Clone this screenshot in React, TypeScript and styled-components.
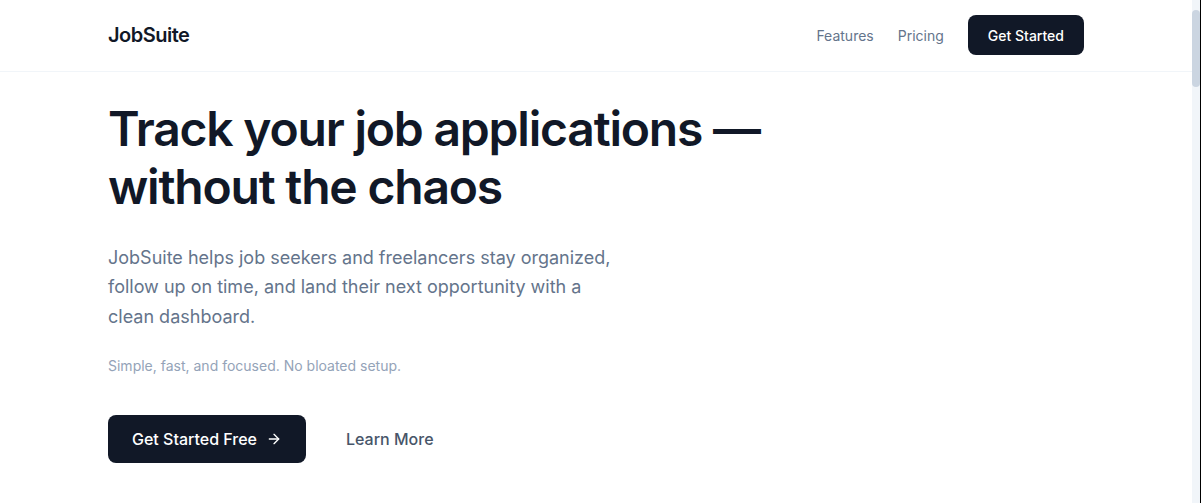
import styled, { createGlobalStyle } from 'styled-components'
import { ArrowRight } from 'lucide-react'

const features = [
  { title: 'Application tracker', text: 'Keep every role, company and status in one tidy board.' },
  { title: 'Follow-up reminders', text: 'Never miss a follow-up with gentle, timely nudges.' },
  { title: 'Clean dashboard', text: 'See your progress at a glance without the clutter.' },
]

const plans = [
  { name: 'Free', price: '$0', text: 'Up to 20 applications' },
  { name: 'Pro', price: '$9', text: 'Unlimited applications and reminders' },
]

export default function App() {
  return (
    <Page>
      <GlobalStyle />
      <Header>
        <Container>
          <Bar>
            <Logo>JobSuite</Logo>
            <Nav>
              <NavLink href="#features">Features</NavLink>
              <NavLink href="#pricing">Pricing</NavLink>
              <Button $size="sm">Get Started</Button>
            </Nav>
          </Bar>
        </Container>
      </Header>

      <Hero>
        <Container>
          <Title>
            Track your job applications —<br />
            without the chaos
          </Title>
          <Lead>
            JobSuite helps job seekers and freelancers stay organized, follow up on time, and land
            their next opportunity with a clean dashboard.
          </Lead>
          <Note>Simple, fast, and focused. No bloated setup.</Note>
          <Actions>
            <Button $size="lg">
              Get Started Free
              <ArrowRight size={16} strokeWidth={2} />
            </Button>
            <GhostLink href="#features">Learn More</GhostLink>
          </Actions>
        </Container>
      </Hero>

      <Section id="features">
        <Container>
          <SectionTitle>Features</SectionTitle>
          <Grid>
            {features.map((f) => (
              <Card key={f.title}>
                <CardTitle>{f.title}</CardTitle>
                <CardText>{f.text}</CardText>
              </Card>
            ))}
          </Grid>
        </Container>
      </Section>

      <Section id="pricing">
        <Container>
          <SectionTitle>Pricing</SectionTitle>
          <Grid>
            {plans.map((p) => (
              <Card key={p.name}>
                <CardTitle>{p.name}</CardTitle>
                <Price>{p.price}</Price>
                <CardText>{p.text}</CardText>
              </Card>
            ))}
          </Grid>
        </Container>
      </Section>

      <ScrollRail>
        <ScrollThumb />
      </ScrollRail>
    </Page>
  )
}

/**
 * style定義
 */
const GlobalStyle = createGlobalStyle`
  * { box-sizing: border-box; }
  html, body {
    margin: 0;
    padding: 0;
    background: #ffffff;
    font-family: Inter, "Noto Sans", "Liberation Sans", sans-serif;
    -webkit-font-smoothing: antialiased;
  }
  ::-webkit-scrollbar { width: 0; }
`

const Page = styled.div`
  padding-right: 9px;
  color: #111827;
`

// scrollbar as it shows in the picture
const ScrollRail = styled.div`
  position: fixed;
  top: 0;
  right: 0;
  width: 9px;
  height: 100vh;
  background: #f1f5f9;
  border-right: 1px solid #000000;
`

const ScrollThumb = styled.div`
  margin-top: 10px;
  width: 8px;
  height: 77px;
  border-radius: 4px;
  background: #cbd5e1;
`

const Container = styled.div`
  max-width: 976px;
  margin: 0 auto;
`

const Header = styled.header`
  background: #ffffff;
  border-bottom: 1px solid #f1f5f9;
`

const Bar = styled.div`
  display: flex;
  align-items: center;
  justify-content: space-between;
  height: 71px;
  padding-bottom: 1px;
`

const Logo = styled.div`
  font-size: 20px;
  font-weight: 600;
  letter-spacing: -0.025em;
  color: #111827;
`

const Nav = styled.nav`
  display: flex;
  align-items: center;
  gap: 24px;
`

const NavLink = styled.a`
  font-size: 14px;
  color: #64748b;
  text-decoration: none;
`

const Button = styled.button<{ $size: 'sm' | 'lg' }>`
  display: inline-flex;
  align-items: center;
  gap: 9px;
  border: none;
  border-radius: 8px;
  background: #111827;
  color: #ffffff;
  font-family: inherit;
  font-weight: 500;
  cursor: pointer;
  height: ${({ $size }) => ($size === 'sm' ? '40px' : '48px')};
  padding: ${({ $size }) => ($size === 'sm' ? '0 20px' : '0 24px')};
  font-size: ${({ $size }) => ($size === 'sm' ? '14px' : '16px')};
`

const Hero = styled.section`
  padding: 28px 0 120px;
`

const Title = styled.h1`
  margin: 0;
  font-size: 48px;
  line-height: 1.2;
  font-weight: 600;
  letter-spacing: -0.025em;
  color: #111827;
`

const Lead = styled.p`
  margin: 28px 0 0;
  max-width: 512px;
  font-size: 18px;
  line-height: 1.625;
  color: #64748b;
`

const Note = styled.p`
  margin: 25px 0 0;
  font-size: 14px;
  line-height: 20px;
  color: #94a3b8;
`

const Actions = styled.div`
  display: flex;
  align-items: center;
  gap: 40px;
  margin-top: 39px;
`

const GhostLink = styled.a`
  font-size: 16px;
  font-weight: 500;
  color: #475569;
  text-decoration: none;
`

const Section = styled.section`
  padding: 96px 0;
  border-top: 1px solid #f1f5f9;
`

const SectionTitle = styled.h2`
  margin: 0 0 32px;
  font-size: 30px;
  font-weight: 700;
  color: #111827;
`

const Grid = styled.div`
  display: grid;
  grid-template-columns: repeat(3, 1fr);
  gap: 24px;
`

const Card = styled.div`
  padding: 24px;
  border: 1px solid #e2e8f0;
  border-radius: 12px;
`

const CardTitle = styled.h3`
  margin: 0 0 8px;
  font-size: 18px;
  font-weight: 600;
`

const Price = styled.div`
  font-size: 32px;
  font-weight: 700;
  margin-bottom: 8px;
`

const CardText = styled.p`
  margin: 0;
  font-size: 15px;
  line-height: 1.6;
  color: #64748b;
`
